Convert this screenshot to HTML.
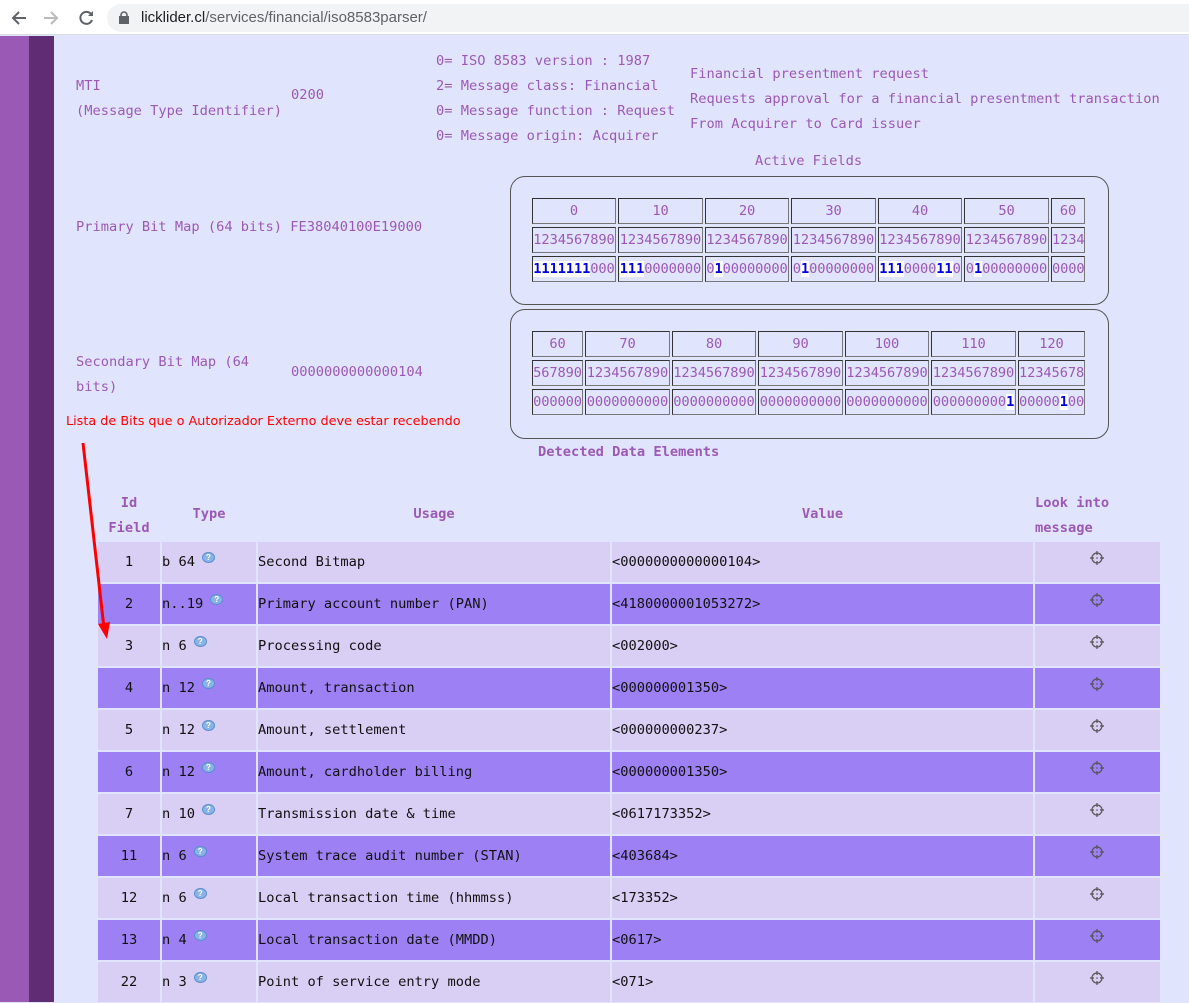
<!DOCTYPE html>
<html><head><meta charset="utf-8"><style>
*{margin:0;padding:0;box-sizing:border-box}
body{width:1189px;height:1002px;overflow:hidden;background:#e1e4fd;font-family:"DejaVu Sans Mono","Liberation Mono",monospace;font-size:13.7px;color:#9b59b6;position:relative}
.a{position:absolute;white-space:nowrap}
.chrome{position:absolute;left:0;top:0;width:1189px;height:35px;background:#fff;border-bottom:1px solid #ddd}
.url{position:absolute;left:107px;top:4px;width:1100px;height:28px;border-radius:14px;background:#f1f3f4}
.box{position:absolute;border:1px solid #555;border-radius:15px}
.row{position:absolute;display:flex;gap:2px}
.c{height:26px;border:1px solid;border-color:#333 #777 #777 #333;text-align:center;line-height:24px;overflow:hidden;white-space:nowrap;letter-spacing:-0.1px}
.b{background:#fff;color:#00d;font-weight:bold}
.tr{position:absolute;left:98px;width:1062px;height:40px;display:flex;gap:2px;color:#111}
.tr>div{height:40px;line-height:41px;white-space:nowrap}
.l>div{background:#d9cef4}.d>div{background:#9e80f5}
.q{display:inline-block;width:13px;height:11px;border-radius:50%;background:#8ab4e8;border:1px solid #5a8fd0;color:#fff;font-size:8px;line-height:9px;text-align:center;vertical-align:6px;margin-left:7px;font-family:"Liberation Sans",sans-serif;font-weight:bold}
.h{font-weight:bold;position:absolute;text-align:center}
</style></head><body>
<div class="chrome">
<svg class="a" style="left:10px;top:9px" width="90" height="18" viewBox="0 0 90 18"><path d="M16 9H4M9 3L3 9l6 6" stroke="#5f6368" stroke-width="2" fill="none"/><path d="M46 9H34M41 3l6 6-6 6" stroke="#bbb" stroke-width="2" fill="none"/><path d="M81 5a6 6 0 1 0 1 6" stroke="#5f6368" stroke-width="2" fill="none"/><path d="M83 2v5h-5z" fill="#5f6368"/></svg>
<div class="url"></div>
<svg class="a" style="left:119px;top:11px" width="10" height="13"><rect x="0" y="5" width="10" height="8" fill="#5f6368"/><path d="M2 6V4a3 3 0 0 1 6 0v2" stroke="#5f6368" stroke-width="1.6" fill="none"/></svg>
<div class="a" style="left:141px;top:9px;font-family:'Liberation Sans',sans-serif;font-size:15px;color:#202124">licklider.cl<span style="color:#5f6368">/services/financial/iso8583parser/</span></div>
</div>
<div class="a" style="left:0;top:36px;width:29px;height:966px;background:#9b59b6"></div>
<div class="a" style="left:29px;top:36px;width:25px;height:966px;background:#5e2d73"></div>

<div class="a" style="left:76px;top:74px;line-height:25px">MTI<br>(Message Type Identifier)</div>
<div class="a" style="left:291px;top:87px">0200</div>
<div class="a" style="left:436px;top:49px;line-height:25px">0= ISO 8583 version : 1987<br>2= Message class: Financial<br>0= Message function : Request<br>0= Message origin: Acquirer</div>
<div class="a" style="left:690px;top:62px;line-height:25px">Financial presentment request<br>Requests approval for a financial presentment transaction<br>From Acquirer to Card issuer</div>
<div class="a" style="left:755px;top:153px">Active Fields</div>
<div class="a" style="left:76px;top:219px">Primary Bit Map (64 bits) FE38040100E19000</div>
<div class="a" style="left:76px;top:350px;line-height:25px">Secondary Bit Map (64<br>bits)</div>
<div class="a" style="left:291px;top:364px">0000000000000104</div>

<div class="box" style="left:510px;top:176px;width:599px;height:129px"></div>
<div class="row" style="left:532px;top:198px"><div class="c" style="width:84px">0</div><div class="c" style="width:85px">10</div><div class="c" style="width:84px">20</div><div class="c" style="width:85px">30</div><div class="c" style="width:84px">40</div><div class="c" style="width:85px">50</div><div class="c" style="width:34px">60</div></div>
<div class="row" style="left:532px;top:227px"><div class="c" style="width:84px">1234567890</div><div class="c" style="width:85px">1234567890</div><div class="c" style="width:84px">1234567890</div><div class="c" style="width:85px">1234567890</div><div class="c" style="width:84px">1234567890</div><div class="c" style="width:85px">1234567890</div><div class="c" style="width:34px">1234</div></div>
<div class="row" style="left:532px;top:256px"><div class="c" style="width:84px"><span class="b">1111111</span>000</div><div class="c" style="width:85px"><span class="b">111</span>0000000</div><div class="c" style="width:84px">0<span class="b">1</span>00000000</div><div class="c" style="width:85px">0<span class="b">1</span>00000000</div><div class="c" style="width:84px"><span class="b">111</span>0000<span class="b">11</span>0</div><div class="c" style="width:85px">0<span class="b">1</span>00000000</div><div class="c" style="width:34px">0000</div></div>

<div class="box" style="left:510px;top:309px;width:599px;height:130px"></div>
<div class="row" style="left:532px;top:331px"><div class="c" style="width:51px">60</div><div class="c" style="width:85px">70</div><div class="c" style="width:84px">80</div><div class="c" style="width:85px">90</div><div class="c" style="width:84px">100</div><div class="c" style="width:85px">110</div><div class="c" style="width:67px">120</div></div>
<div class="row" style="left:532px;top:360px"><div class="c" style="width:51px">567890</div><div class="c" style="width:85px">1234567890</div><div class="c" style="width:84px">1234567890</div><div class="c" style="width:85px">1234567890</div><div class="c" style="width:84px">1234567890</div><div class="c" style="width:85px">1234567890</div><div class="c" style="width:67px">12345678</div></div>
<div class="row" style="left:532px;top:389px"><div class="c" style="width:51px">000000</div><div class="c" style="width:85px">0000000000</div><div class="c" style="width:84px">0000000000</div><div class="c" style="width:85px">0000000000</div><div class="c" style="width:84px">0000000000</div><div class="c" style="width:85px">000000000<span class="b">1</span></div><div class="c" style="width:67px">00000<span class="b">1</span>00</div></div>

<div class="a" style="left:66px;top:414px;font-family:'DejaVu Sans','Liberation Sans',sans-serif;font-size:12.8px;color:#f00">Lista de Bits que o Autorizador Externo deve estar recebendo</div>
<div class="a" style="left:538px;top:444px;font-weight:bold">Detected Data Elements</div>

<div class="h" style="left:98px;top:491px;width:62px;line-height:25px">Id<br>Field</div>
<div class="h" style="left:162px;top:506px;width:94px">Type</div>
<div class="h" style="left:258px;top:506px;width:352px">Usage</div>
<div class="h" style="left:612px;top:506px;width:421px">Value</div>
<div class="h" style="left:1035px;top:491px;text-align:left;line-height:25px">Look into<br>message</div>

<div id="t"></div>
<script>
var r=[["1","b 64","Second Bitmap","0000000000000104"],["2","n..19","Primary account number (PAN)","4180000001053272"],["3","n 6","Processing code","002000"],["4","n 12","Amount, transaction","000000001350"],["5","n 12","Amount, settlement","000000000237"],["6","n 12","Amount, cardholder billing","000000001350"],["7","n 10","Transmission date &amp; time","0617173352"],["11","n 6","System trace audit number (STAN)","403684"],["12","n 6","Local transaction time (hhmmss)","173352"],["13","n 4","Local transaction date (MMDD)","0617"],["22","n 3","Point of service entry mode","071"]];
var s="",ic='<svg width="16" height="16" viewBox="0 0 16 16" style="position:absolute;left:54px;top:8px"><circle cx="8" cy="8" r="5" fill="none" stroke="#555" stroke-width="1.2"/><path d="M8 1v4M8 11v4M1 8h4M11 8h4" stroke="#555" stroke-width="1.2"/><circle cx="8" cy="8" r="0.8" fill="#555"/></svg>';
r.forEach(function(x,i){s+='<div class="tr '+(i%2?'d':'l')+'" style="top:'+(542+42*i)+'px"><div style="width:62px;text-align:center">'+x[0]+'</div><div style="width:94px">'+x[1]+'<span class="q">?</span></div><div style="width:352px">'+x[2]+'</div><div style="width:421px">&lt;'+x[3]+'&gt;</div><div style="width:125px;position:relative">'+ic+'</div></div>';});
document.getElementById("t").innerHTML=s;
</script>
<svg class="a" style="left:0;top:0" width="200" height="700"><path d="M83 443L104 628" stroke="#f00" stroke-width="3"/><path d="M98 624l9 15 3-17z" fill="#f00"/></svg>
</body></html>
